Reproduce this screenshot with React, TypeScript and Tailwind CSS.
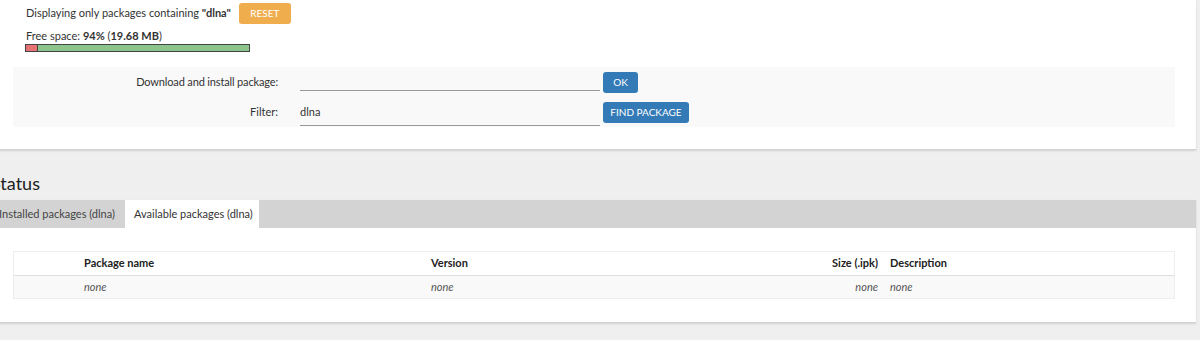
import React from "react";

export default function App() {
  return (
    <div className="w-[1200px] h-[340px] overflow-hidden bg-[#efefef] text-[#333] text-[11px] font-['Lato','Open_Sans',sans-serif]">
      <div className="-ml-[10px] w-[1206px]">
        {/* Top card */}
        <div className="bg-white h-[150px] border-b border-[#d0d0d0] shadow-[0_1px_2px_rgba(0,0,0,0.12)] pl-[36px] pr-[21px] pt-[3px]">
          <div className="flex items-center h-[21px]">
            <span>
              Displaying only packages containing <b className="font-bold">"dlna"</b>
            </span>
            <span className="ml-[8px] h-[21px] w-[52px] rounded-[3px] bg-[#f0ad4e] text-white text-[10px] flex items-center justify-center">
              RESET
            </span>
          </div>
          <div className="mt-[5px] leading-[14px]">
            Free space: <b className="font-bold">94%</b> (<b className="font-bold">19.68 MB</b>)
          </div>
          <div className="mt-[1px] -ml-[1px] w-[225px] h-[8px] border border-[#444] bg-[#8cc48c] flex">
            <div className="w-[12px] h-full bg-[#e57373] border-r border-[#444]" />
          </div>
          <div className="mt-[15px] -ml-[13px] w-[1162px] h-[60px] bg-[#f9f9f9] pt-[1px]">
            <div className="flex items-start h-[23px]">
              <div className="w-[265px] text-right mt-[7px] leading-[14px] tracking-[-0.15px]">Download and install package:</div>
              <div className="ml-[22px] w-[300px] h-[23px] border-b border-[#999]" />
              <span className="ml-[3px] mt-[4px] h-[21px] w-[35px] rounded-[3px] bg-[#337ab7] text-white text-[10px] flex items-center justify-center">
                OK
              </span>
            </div>
            <div className="flex items-start h-[24px] mt-[11px]">
              <div className="w-[265px] text-right mt-[3px] leading-[14px]">Filter:</div>
              <div className="ml-[22px] w-[300px] h-[24px] border-b border-[#999] pt-[3px] leading-[14px]">dlna</div>
              <span className="ml-[3px] h-[21px] w-[86px] rounded-[3px] bg-[#337ab7] text-white text-[10px] flex items-center justify-center">
                FIND PACKAGE
              </span>
            </div>
          </div>
        </div>

        {/* Heading */}
        <div className="h-[50px] flex items-end pb-[6px] pl-[1px]">
          <h2 className="text-[18px] leading-[22px] text-[#222]">Status</h2>
        </div>

        {/* Tabs + card */}
        <div className="bg-white border-b border-[#d0d0d0] shadow-[0_1px_2px_rgba(0,0,0,0.12)] w-[1206px]">
          <div className="flex h-[28px] bg-[#d3d3d3] text-[#444]">
            <div className="w-[135px] pl-[9px] flex items-center">Installed packages (dlna)</div>
            <div className="w-[134px] pl-[9px] flex items-center bg-white text-[#333]">Available packages (dlna)</div>
          </div>
          <div className="pl-[23px] pt-[23px] pb-[23px]">
            <div className="w-[1162px] border border-[#eee] border-b-0">
              <div className="flex h-[24px] items-center font-bold text-[#222] bg-white border-b border-[#ddd]">
                <div className="w-[62px]" />
                <div className="w-[347px] pl-[8px]">Package name</div>
                <div className="w-[400px] pl-[8px]">Version</div>
                <div className="w-[59px] text-right pr-[4px]">Size (.ipk)</div>
                <div className="pl-[8px]">Description</div>
              </div>
              <div className="flex h-[23px] items-center italic text-[#555] bg-[#f9f9f9] border-b border-[#eee]">
                <div className="w-[62px]" />
                <div className="w-[347px] pl-[8px]">none</div>
                <div className="w-[400px] pl-[8px]">none</div>
                <div className="w-[59px] text-right pr-[4px]">none</div>
                <div className="pl-[8px]">none</div>
              </div>
            </div>
          </div>
        </div>
      </div>
    </div>
  );
}
